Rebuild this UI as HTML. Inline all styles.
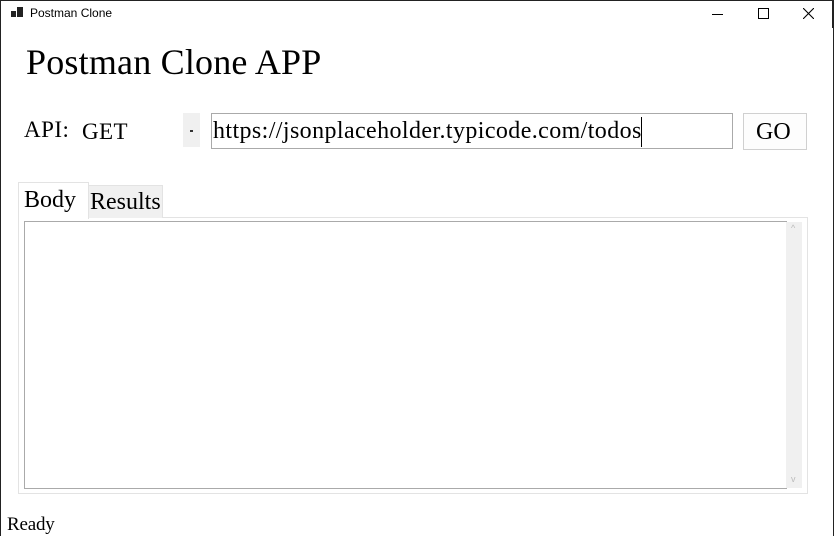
<!DOCTYPE html><html><head><style>
body{margin:0;width:834px;height:536px;position:relative;background:#fff;overflow:hidden;font-family:"Liberation Serif",serif;color:#000}
.a{position:absolute;white-space:nowrap}
</style></head><body>
<div class="a" style="left:0;top:0;width:1px;height:536px;background:#222"></div>
<div class="a" style="left:832px;top:0;width:2px;height:28px;background:#222"></div>
<div class="a" style="left:833px;top:28px;width:1px;height:508px;background:#222"></div>
<div class="a" style="left:0;top:0;width:834px;height:1px;background:#222"></div>
<div class="a" style="left:11px;top:11px;width:5px;height:6px;background:#222"></div>
<div class="a" style="left:17px;top:7px;width:6px;height:10px;background:#222"></div>
<div class="a" style="left:30px;top:6px;font:12px 'Liberation Sans',sans-serif">Postman Clone</div>
<div class="a" style="left:712px;top:14px;width:11px;height:1px;background:#000"></div>
<div class="a" style="left:758px;top:8px;width:9px;height:9px;border:1px solid #000"></div>
<svg class="a" style="left:803px;top:8px" width="11" height="11"><path d="M0 0L11 11M11 0L0 11" stroke="#000" stroke-width="1.1"/></svg>
<div class="a" style="left:26px;top:41px;font-size:36px;letter-spacing:0.2px">Postman Clone APP</div>
<div class="a" style="left:24px;top:117px;font-size:23px;letter-spacing:0.5px">API:</div>
<div class="a" style="left:82px;top:119px;font-size:23px;letter-spacing:0.4px">GET</div>
<div class="a" style="left:183px;top:113px;width:17px;height:34px;background:#f0f0f0"></div>
<div class="a" style="left:190px;top:130px;width:3px;height:2px;background:#333"></div>
<div class="a" style="left:211px;top:113px;width:520px;height:34px;border:1px solid #aaa"></div>
<div class="a" style="left:213px;top:118px;font-size:24px;letter-spacing:0.4px">https://jsonplaceholder.typicode.com/todos</div>
<div class="a" style="left:641px;top:117px;width:1px;height:30px;background:#000"></div>
<div class="a" style="left:743px;top:113px;width:62px;height:35px;border:1px solid #d0d0d0;background:#fdfdfd"></div>
<div class="a" style="left:756px;top:119px;font-size:24px">GO</div>
<div class="a" style="left:18px;top:217px;width:788px;height:275px;border:1px solid #e3e3e3"></div>
<div class="a" style="left:18px;top:182px;width:69px;height:36px;border:1px solid #e3e3e3;border-bottom:none;background:#fff"></div>
<div class="a" style="left:88px;top:185px;width:73px;height:32px;background:#f0f0f0;border:1px solid #e3e3e3;border-bottom:none"></div>
<div class="a" style="left:24px;top:187px;font-size:24px">Body</div>
<div class="a" style="left:90px;top:189px;font-size:24px">Results</div>
<div class="a" style="left:24px;top:221px;width:761px;height:266px;border:1px solid #aaa"></div>
<div class="a" style="left:786px;top:222px;width:16px;height:266px;background:#f0f0f0"></div>
<div class="a" style="left:791px;top:223px;font:9px sans-serif;color:#bbb">^</div>
<div class="a" style="left:791px;top:474px;font:9px sans-serif;color:#bbb">v</div>
<div class="a" style="left:7px;top:514px;font-size:19px;letter-spacing:-0.2px">Ready</div>
</body></html>
